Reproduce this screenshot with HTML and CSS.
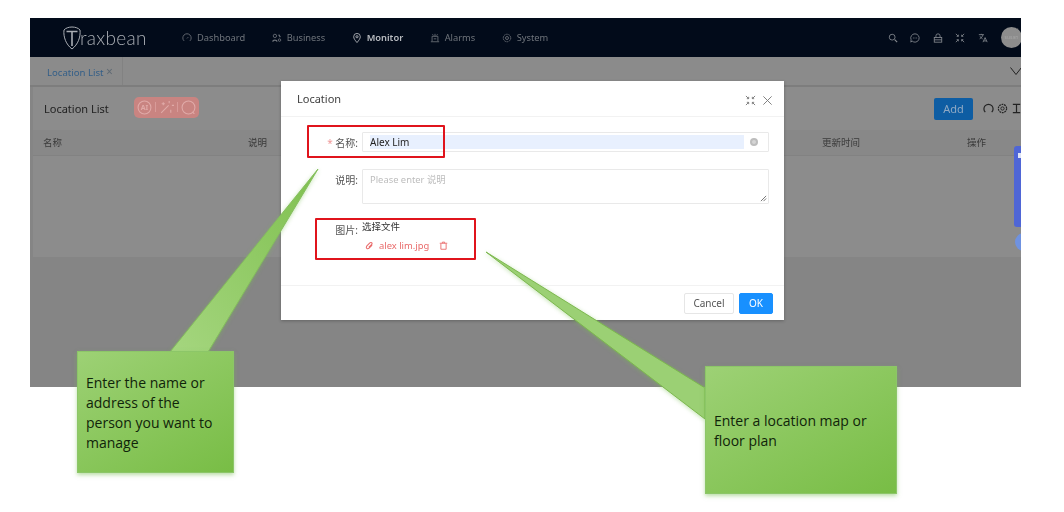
FILE: index.html
```html
<!DOCTYPE html>
<html lang="en">

<head>
    <meta charset="UTF-8">
    <meta name="viewport" content="width=device-width, initial-scale=1.0">
    <title>Location List</title>
    <link rel="stylesheet" href="styles.css">
</head>

<body>
    <div class="shot">
        <div class="app">
            <header class="navbar">
                <div class="logo">
                    <svg width="18" height="24" viewBox="0 0 18 24">
                        <path d="M9 1C12.500 1 15.500 2.200 17 4C17.800 11 15 18.500 9 23C3 18.500 .2 11 1 4C2.500 2.200 5.500 1 9 1Z" />
                        <path d="M3.500 5.500H14.500M9 5.500V20" stroke-width="1.600" />
                    </svg>
                    <span>raxbean</span>
                </div>
                <nav class="menu">
                    <a><svg class="ni" viewBox="0 0 12 12"><path d="M2.500 9.500A5 5 0 1 1 9.500 9.500M6 6.500L7.500 5" /></svg>Dashboard</a>
                    <a><svg class="ni" viewBox="0 0 12 12"><circle cx="3.500" cy="3.500" r="2" /><circle cx="9" cy="8.500" r="1.500" /><path d="M1 10.500C1 8 6 8 6 10.500M8 2L10 5" stroke-width="1.400" /></svg>Business</a>
                    <a class="active"><svg class="ni" viewBox="0 0 12 12"><path d="M6 11.500C3.500 8.500 2 6.500 2 4.500A4 4 0 0 1 10 4.500C10 6.500 8.500 8.500 6 11.500Z" /><circle cx="6" cy="4.500" r="1.300" /></svg>Monitor</a>
                    <a><svg class="ni" viewBox="0 0 12 12"><path d="M2.500 10V4H9.500V10M1 10.500H11M6 4V1M3 1.500L4 3M9 1.500L8 3M4.500 7H7.500" /></svg>Alarms</a>
                    <a><svg class="ni" viewBox="0 0 12 12"><circle cx="6" cy="6" r="4.500" stroke-dasharray="2 .8" /><circle cx="6" cy="6" r="1.800" /></svg>System</a>
                </nav>
                <div class="tools">
                    <svg class="ti" viewBox="0 0 12 12"><circle cx="5" cy="5" r="3.500" /><path d="M8 8L11 11" stroke-width="1.400" /></svg>
                    <svg class="ti" viewBox="0 0 12 12"><path d="M6 1A5 5 0 1 1 2.500 9.600L1 11L1.300 8A5 5 0 0 1 6 1Z" /><path d="M3.500 6H8.500" stroke-dasharray="1 1" /></svg>
                    <svg class="ti" viewBox="0 0 12 12"><rect x="1.500" y="5.500" width="9" height="5.500" /><path d="M3.500 5.500V3.500A2.500 2.500 0 0 1 8.500 3.500V5.500M1.500 8.200H10.500" /></svg>
                    <svg class="ti" viewBox="0 0 12 12"><path d="M1 1L4 4M4 2V4H2M11 1L8 4M8 2V4H10M1 11L4 8M4 10V8H2M11 11L8 8M8 10V8H10" /></svg>
                    <svg class="ti" viewBox="0 0 12 12"><path d="M1 2H7M4 1V2M2 7C4 6 5.500 4 6 2M2.500 4C3.500 6 4.500 6.500 5.500 7M6 11L8.500 5.500L11 11M7 9.500H10" /></svg>
                    <div class="avatar">susan</div>
                </div>
            </header>

            <div class="tabs">
                <div class="tab">Location List <span class="tab-x">×</span></div>
                <svg class="tabs-down" viewBox="0 0 12 8"><path d="M.5 .5L6 7.500L11.500 .5" /></svg>
            </div>

            <div class="panel">
                <div class="panel-head">
                    <div class="panel-title">Location List</div>
                    <div class="pill">
                        <svg viewBox="0 0 14 14"><circle cx="7" cy="7" r="6" /><text x="7" y="9.500" text-anchor="middle" class="pill-ai">AI</text></svg>
                        <i></i>
                        <svg viewBox="0 0 14 14"><path d="M2 12L9 5M9.500 1V3M12 5H14M4 2V5M2.500 3.500H5.500M11 9V12" /></svg>
                        <i></i>
                        <svg viewBox="0 0 14 14"><circle cx="7" cy="7" r="6" /><path d="M10.500 11L12.500 13" /></svg>
                    </div>
                    <div class="panel-actions">
                        <button class="add">Add</button>
                        <svg class="ai" viewBox="0 0 12 12"><path d="M2.500 10A5 5 0 1 1 9.500 10" stroke-width="1.300" /></svg>
                        <svg class="ai" viewBox="0 0 12 12"><circle cx="6" cy="6" r="4.500" stroke-dasharray="2 .8" stroke-width="1.300" /><circle cx="6" cy="6" r="1.800" /></svg>
                        <svg class="ai" viewBox="0 0 12 12"><path d="M2 1.500H10M6 1.500V10.500M2 10.500H10" stroke-width="1.300" /></svg>
                    </div>
                </div>
                <div class="thead">
                    <div class="th th-name">名称</div>
                    <div class="th th-desc">说明</div>
                    <div class="th th-time">更新时间</div>
                    <div class="th th-op">操作</div>
                </div>
                <div class="tbody"></div>
            </div>
        </div>

        <div class="side-tab"></div>
        <div class="side-dot"></div>

        <div class="modal">
            <div class="modal-head">
                <span>Location</span>
                <div class="modal-icons">
                    <svg viewBox="0 0 12 12"><path d="M1 1L4 4M4 2V4H2M11 1L8 4M8 2V4H10M1 11L4 8M4 10V8H2M11 11L8 8M8 10V8H10" /></svg>
                    <svg viewBox="0 0 12 12"><path d="M1.500 1.500L10.500 10.500M10.500 1.500L1.500 10.500" /></svg>
                </div>
            </div>
            <div class="modal-body">
                <div class="row">
                    <label class="lbl"><b>*</b> 名称:</label>
                    <div class="input">
                        <div class="autofill">Alex Lim</div>
                        <span class="clear"></span>
                    </div>
                </div>
                <div class="row">
                    <label class="lbl">说明:</label>
                    <div class="textarea">Please enter 说明
                        <svg class="grip" viewBox="0 0 8 8"><path d="M7 1L1 7M7 4L4 7" /></svg>
                    </div>
                </div>
                <div class="row row-file">
                    <label class="lbl">图片:</label>
                    <div class="file">
                        <div class="file-btn">选择文件</div>
                        <div class="file-item">
                            <svg viewBox="0 0 12 12"><path d="M9.500 5.500L5.500 9.500C3 11.500 .5 9 2.500 6.500L6.500 2.500C8 1 10.500 3 9 4.500L5 8.500" stroke-width="1.400" /></svg>
                            <span>alex lim.jpg</span>
                            <svg viewBox="0 0 12 12"><path d="M2.500 3.500V11H9.500V3.500M1 3H11M4.500 3V1.500H7.500V3" stroke-width="1.200" /></svg>
                        </div>
                    </div>
                </div>
            </div>
            <div class="modal-foot">
                <button class="btn">Cancel</button>
                <button class="btn btn-ok">OK</button>
            </div>
        </div>
    </div>

    <!-- annotations on top of the screenshot -->
    <svg class="tails" width="1064" height="512" viewBox="0 0 1064 512">
        <defs>
            <linearGradient id="tailGreen" x1="0" y1="1" x2="1" y2="0">
                <stop offset="0" stop-color="#a5d67f" />
                <stop offset="1" stop-color="#7fc04f" />
            </linearGradient>
        </defs>
        <polygon points="318,169 170,352 208,352" fill="url(#tailGreen)" stroke="#86bf5e" />
        <polygon points="486,252 705,388 705,419" fill="#9bd074" stroke="#7db84f" />
    </svg>
    <div class="box box-name"></div>
    <div class="box box-file"></div>
    <div class="note note-one">Enter the name or address of the person you want to manage</div>
    <div class="note note-two">Enter a location map or floor plan</div>
</body>

</html>
```

FILE: styles.css
```css
* {
    box-sizing: border-box;
    margin: 0;
    padding: 0;
}

body {
    position: relative;
    width: 1064px;
    height: 512px;
    overflow: hidden;
    background-color: #fff;
    font-family: "Noto Sans", "Noto Sans CJK SC", sans-serif;
}

svg {
    fill: none;
    stroke: currentColor;
    stroke-width: 1;
}

.shot {
    position: absolute;
    left: 30px;
    top: 18px;
    width: 991px;
    height: 369px;
    overflow: hidden;
    background-color: #858585;
    filter: blur(0.35px);
}

.app {
    display: flex;
    flex-direction: column;
    height: 100%;
}

/* top bar */
.navbar {
    display: flex;
    align-items: center;
    height: 39px;
    flex-shrink: 0;
    background-color: #020b1a;
    color: #6f747b;
    font-size: 9.3px;
}

.logo {
    display: flex;
    align-items: center;
    width: 152px;
    padding-left: 33px;
    color: #a9adb3;
}

.logo span {
    margin-left: -1px;
    font-family: "Lato", sans-serif;
    font-size: 19px;
    font-weight: 300;
    letter-spacing: .3px;
}

.menu {
    display: flex;
    gap: 26.500px;
}

.menu a {
    display: flex;
    align-items: center;
    gap: 5px;
}

.menu .active {
    color: #b9bcc0;
    font-weight: 600;
}

.ni {
    width: 10px;
    height: 10px;
}

.tools {
    display: flex;
    align-items: center;
    gap: 12.500px;
    margin-left: auto;
    color: #878b91;
}

.ti {
    width: 10px;
    height: 10px;
}

.avatar {
    width: 21px;
    height: 21px;
    margin-left: 1px;
    margin-right: -1px;
    border-radius: 50%;
    background-color: #8d8d8d;
    color: #a5a5a5;
    font-size: 5px;
    line-height: 21px;
    text-align: center;
}

/* tabs */
.tabs {
    display: flex;
    align-items: center;
    justify-content: space-between;
    height: 30px;
    flex-shrink: 0;
    border-bottom: 2px solid #7d7d7d;
    background-color: #8b8b8b;
}

.tab {
    height: 100%;
    padding: 9px 9px 0 17px;
    border-right: 1px solid #828282;
    color: #345f88;
    font-size: 9.600px;
}

.tab-x {
    color: #5f6a74;
    font-size: 12px;
    line-height: 10px;
}

.tabs-down {
    width: 12px;
    height: 8px;
    margin-right: -1px;
    color: #222;
}

/* list behind the dialog */
.panel {
    margin-left: 3px;
    height: 171px;
    background-color: #8c8c8c;
    border-bottom: 1px solid #858585;
}

.panel-head {
    display: flex;
    align-items: center;
    height: 43px;
    padding-left: 11px;
}

.panel-title {
    width: 90px;
    color: #222;
    font-size: 11px;
}

.pill {
    display: flex;
    align-items: center;
    gap: 3px;
    height: 21px;
    margin-top: -3px;
    padding: 0 3px;
    border-radius: 5px;
    background-color: #c98481;
    color: #e0aaa8;
}

.pill svg {
    width: 15px;
    height: 15px;
}

.pill-ai {
    fill: currentColor;
    stroke: none;
    font-size: 6.500px;
    font-weight: 700;
}

.pill i {
    width: 1px;
    height: 10px;
    background-color: #d89b99;
}

.panel-actions {
    display: flex;
    align-items: center;
    gap: 3px;
    margin-left: auto;
    margin-right: -1px;
    color: #222;
}

.add {
    width: 39px;
    height: 22px;
    margin-right: 7px;
    border: 0;
    border-radius: 2px;
    background-color: #0e5da3;
    color: #8fa9c4;
    font-family: inherit;
    font-size: 11px;
}

.ai {
    width: 11px;
    height: 11px;
}

.thead {
    position: relative;
    height: 26px;
    border-bottom: 1px solid #828282;
    background-color: #888;
    color: #3a3a3a;
    font-size: 9.500px;
    line-height: 26px;
}

.th {
    position: absolute;
    top: 0;
}

.th-name {
    left: 10px;
}

.th-desc {
    left: 215px;
}

.th-time {
    left: 789px;
}

.th-op {
    left: 934px;
}

/* blue widget on the edge */
.side-tab {
    position: absolute;
    left: 984px;
    top: 128px;
    width: 10px;
    height: 81px;
    border-radius: 3px;
    background-color: #4f66d6;
}

.side-tab::before {
    content: "";
    position: absolute;
    left: 4px;
    top: 7px;
    width: 6px;
    height: 5px;
    background-color: #dfe4f7;
}

.side-dot {
    position: absolute;
    left: 985px;
    top: 215px;
    width: 18px;
    height: 18px;
    border-radius: 50%;
    background-color: #6f92e0;
}

/* dialog */
.modal {
    position: absolute;
    left: 251px;
    top: 63px;
    width: 503px;
    height: 239px;
    display: flex;
    flex-direction: column;
    background-color: #fff;
    box-shadow: 0 1px 3px rgba(0, 0, 0, .25);
}

.modal-head {
    display: flex;
    align-items: center;
    justify-content: space-between;
    height: 36px;
    padding: 0 11px 1px 16px;
    border-bottom: 1px solid #f2f2f2;
    color: #3f3f3f;
    font-size: 11px;
}

.modal-icons {
    display: flex;
    gap: 6px;
    margin-top: 5px;
    color: #777;
}

.modal-icons svg {
    width: 11px;
    height: 11px;
}

.modal-body {
    flex: 1;
    display: flex;
    flex-direction: column;
    gap: 17px;
    padding: 15px 15px 0 0;
    color: #555;
    font-size: 10px;
}

.row {
    display: flex;
    gap: 4px;
}

.lbl {
    width: 77px;
    flex-shrink: 0;
    padding-top: 3px;
    text-align: right;
    color: #555;
}

.lbl b {
    color: #ef9a9a;
    font-weight: 400;
}

.input {
    flex: 1;
    display: flex;
    align-items: center;
    height: 20px;
    padding: 0 10px 0 7px;
    border: 1px solid #e9e9e9;
    border-radius: 1px;
}

.autofill {
    flex: 1;
    height: 14px;
    background-color: #e8f0fe;
    color: #222;
    line-height: 14px;
}

.clear {
    width: 8px;
    height: 8px;
    margin-left: 6px;
    border: 2px solid #bdbdbd;
    border-radius: 50%;
    background-color: #d5d5d5;
}

.textarea {
    position: relative;
    flex: 1;
    height: 35px;
    padding: 2px 7px;
    border: 1px solid #e9e9e9;
    border-radius: 1px;
    color: #bdbdbd;
    font-size: 9.400px;
}

.grip {
    position: absolute;
    right: 1px;
    bottom: 1px;
    width: 7px;
    height: 7px;
    color: #666;
}

.row-file {
    margin-top: -2px;
}

.file-btn {
    color: #333;
    font-size: 9.500px;
}

.file-item {
    display: flex;
    align-items: center;
    gap: 5px;
    margin-top: 6px;
    margin-left: 3px;
    color: #e96b6b;
    font-size: 9.400px;
}

.file-item svg {
    width: 9px;
    height: 9px;
}

.file-item svg:last-child {
    margin-left: 5px;
}

.modal-foot {
    display: flex;
    align-items: center;
    justify-content: flex-end;
    gap: 5px;
    height: 35px;
    padding-right: 11px;
    border-top: 1px solid #f2f2f2;
}

.btn {
    width: 50px;
    height: 21px;
    border: 1px solid #e6e6e6;
    border-radius: 2px;
    background-color: #fff;
    color: #555;
    font-family: inherit;
    font-size: 10px;
}

.btn-ok {
    width: 34px;
    border-color: #1890ff;
    background-color: #1890ff;
    color: #fff;
}

/* annotations */
.tails {
    position: absolute;
    left: 0;
    top: 0;
    filter: drop-shadow(0 1px 2px rgba(120, 190, 80, .45));
}

.box {
    position: absolute;
    border: 2px solid #e0141c;
    border-radius: 1px;
}

.box-name {
    left: 307px;
    top: 125px;
    width: 138px;
    height: 33px;
}

.box-file {
    left: 315px;
    top: 218px;
    width: 161px;
    height: 42px;
}

.note {
    position: absolute;
    padding-left: 8px;
    padding-right: 16px;
    border: 1px solid #8cc668;
    background: linear-gradient(150deg, #9dd175, #78bd45);
    box-shadow: 0 2px 4px rgba(120, 190, 80, .5);
    color: #10240a;
    font-family: "Open Sans", sans-serif;
    font-size: 14px;
    line-height: 20px;
}

.note-one {
    left: 77px;
    top: 351px;
    width: 157px;
    height: 122px;
    padding-top: 21px;
}

.note-two {
    left: 705px;
    top: 366px;
    width: 192px;
    height: 128px;
    padding-top: 44px;
}
```
